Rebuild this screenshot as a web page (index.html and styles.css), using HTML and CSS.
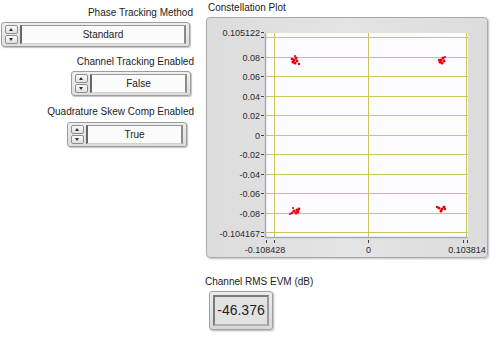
FILE: index.html
```html
<!DOCTYPE html>
<html>
<head>
<meta charset="utf-8">
<link rel="stylesheet" href="styles.css">
</head>
<body>
<div class="page">
  <div class="left">
    <div class="lbl l1">Phase Tracking Method</div>
    <div class="ring wide">
      <div class="spin"><span class="btn up"></span><span class="btn down"></span></div>
      <div class="field">Standard</div>
    </div>
    <div class="lbl l2">Channel Tracking Enabled</div>
    <div class="ring narrow">
      <div class="spin"><span class="btn up"></span><span class="btn down"></span></div>
      <div class="field">False</div>
    </div>
    <div class="lbl l3">Quadrature Skew Comp Enabled</div>
    <div class="ring narrow third">
      <div class="spin"><span class="btn up"></span><span class="btn down"></span></div>
      <div class="field">True</div>
    </div>
  </div>
  <div class="right">
    <div class="lbl plotlbl">Constellation Plot</div>
    <div class="frame">
      <svg class="plot" width="280" height="239" viewBox="0 0 280 239">
        <rect x="58" y="15" width="203" height="204" fill="#fcfcfe"/>
        <g stroke="#c9c95a" stroke-width="1">
          <line x1="58" y1="19.5" x2="261" y2="19.5"/>
          <line x1="58" y1="39.5" x2="261" y2="39.5"/>
          <line x1="58" y1="58.5" x2="261" y2="58.5"/>
          <line x1="58" y1="78.5" x2="261" y2="78.5"/>
          <line x1="58" y1="97.5" x2="261" y2="97.5"/>
          <line x1="58" y1="117.5" x2="261" y2="117.5"/>
          <line x1="58" y1="136.5" x2="261" y2="136.5"/>
          <line x1="58" y1="156.5" x2="261" y2="156.5"/>
          <line x1="58" y1="175.5" x2="261" y2="175.5"/>
          <line x1="58" y1="195.5" x2="261" y2="195.5"/>
          <line x1="58" y1="214.5" x2="261" y2="214.5"/>
          <line x1="67.5" y1="15" x2="67.5" y2="219"/>
          <line x1="161.5" y1="15" x2="161.5" y2="219"/>
          <line x1="259.5" y1="15" x2="259.5" y2="219"/>
        </g>
        <g stroke="#a4aac6" stroke-width="1.5">
          <line x1="58.5" y1="15" x2="58.5" y2="219.5"/>
          <line x1="58" y1="219.5" x2="261" y2="219.5"/>
        </g>
        <g stroke="#444" stroke-width="1">
          <line x1="54" y1="14.5" x2="57" y2="14.5"/>
          <line x1="54" y1="19.5" x2="57" y2="19.5"/>
          <line x1="54" y1="39.5" x2="57" y2="39.5"/>
          <line x1="54" y1="58.5" x2="57" y2="58.5"/>
          <line x1="54" y1="78.5" x2="57" y2="78.5"/>
          <line x1="54" y1="97.5" x2="57" y2="97.5"/>
          <line x1="54" y1="117.5" x2="57" y2="117.5"/>
          <line x1="54" y1="136.5" x2="57" y2="136.5"/>
          <line x1="54" y1="156.5" x2="57" y2="156.5"/>
          <line x1="54" y1="175.5" x2="57" y2="175.5"/>
          <line x1="54" y1="195.5" x2="57" y2="195.5"/>
          <line x1="54" y1="214.5" x2="57" y2="214.5"/>
          <line x1="54" y1="218.5" x2="57" y2="218.5"/>
          <line x1="59.5" y1="222" x2="59.5" y2="225"/>
          <line x1="67.5" y1="222" x2="67.5" y2="225"/>
          <line x1="161.5" y1="222" x2="161.5" y2="225"/>
          <line x1="256.5" y1="222" x2="256.5" y2="225"/>
          <line x1="260.5" y1="222" x2="260.5" y2="225"/>
        </g>
        <g class="ax" text-anchor="end">
          <text x="53" y="17.5">0.105122</text>
          <text x="53" y="42.5">0.08</text>
          <text x="53" y="61.5">0.06</text>
          <text x="53" y="81.5">0.04</text>
          <text x="53" y="100.5">0.02</text>
          <text x="53" y="120.5">0</text>
          <text x="53" y="139.5">-0.02</text>
          <text x="53" y="159.5">-0.04</text>
          <text x="53" y="178.5">-0.06</text>
          <text x="53" y="198.5">-0.08</text>
          <text x="53" y="219">-0.104167</text>
        </g>
        <g class="ax" text-anchor="middle">
          <text x="58" y="235">-0.108428</text>
          <text x="161.5" y="235">0</text>
          <text x="260" y="235">0.103814</text>
        </g>
        <g fill="#e80000">
          <circle cx="87" cy="42" r="1.6"/><circle cx="89" cy="40" r="1.5"/><circle cx="86" cy="44" r="1.6"/>
          <circle cx="88" cy="45" r="1.5"/><circle cx="90" cy="43" r="1.4"/><circle cx="85" cy="41" r="1.3"/>
          <circle cx="92" cy="46" r="1.2"/><circle cx="88" cy="38" r="1.1"/>
          <circle cx="234" cy="42" r="1.6"/><circle cx="236" cy="40" r="1.5"/><circle cx="233" cy="44" r="1.5"/>
          <circle cx="235" cy="45" r="1.5"/><circle cx="237" cy="43" r="1.4"/><circle cx="238" cy="39" r="1.1"/>
          <circle cx="232" cy="42" r="1.2"/>
          <circle cx="87" cy="193" r="1.6"/><circle cx="90" cy="192" r="1.6"/><circle cx="89" cy="195" r="1.5"/>
          <circle cx="92" cy="191" r="1.4"/><circle cx="85" cy="195" r="1.3"/><circle cx="86" cy="190" r="1.1"/>
          <circle cx="83" cy="196" r="1.1"/><circle cx="91" cy="194" r="1.4"/>
          <circle cx="232" cy="190" r="1.5"/><circle cx="235" cy="191" r="1.6"/><circle cx="237" cy="189" r="1.5"/>
          <circle cx="234" cy="193" r="1.5"/><circle cx="230" cy="189" r="1.2"/><circle cx="238" cy="191" r="1.2"/>
        </g>
      </svg>
    </div>
    <div class="lbl evmlbl">Channel RMS EVM (dB)</div>
    <div class="evm">
      <div class="evmin">-46.376</div>
    </div>
  </div>
</div>
</body>
</html>
```
FILE: styles.css
```css
html, body {
  margin: 0;
  padding: 0;
  background: #ffffff;
}
body {
  width: 500px;
  height: 337px;
  overflow: hidden;
  font-family: "Liberation Sans", Arial, sans-serif;
  color: #222;
}
.page {
  display: flex;
  align-items: flex-start;
}
.left {
  width: 195px;
  display: flex;
  flex-direction: column;
  align-items: flex-end;
  padding-top: 7px;
}
.lbl {
  font-size: 10px;
  line-height: 12px;
  white-space: nowrap;
  color: #222;
}
.l1 { margin-right: 2px; }
.l2 { margin-right: 1px; margin-top: 9px; }
.l3 { margin-right: 1px; margin-top: 10px; }
.ring {
  box-sizing: border-box;
  margin-top: 3px;
  height: 25px;
  display: flex;
  align-items: stretch;
  padding: 2px 3px 2px 3px;
  border: 1px solid #9d9d9d;
  border-radius: 3px;
  background: linear-gradient(#eeeeee, #dedede);
  box-shadow: 1px 1px 1px rgba(0, 0, 0, 0.25);
}
.wide { width: 189px; margin-right: 5px; }
.narrow { width: 120px; margin-right: 4px; }
.third { margin-right: 8px; margin-top: 4px; }
.spin {
  width: 13px;
  display: flex;
  flex-direction: column;
  gap: 1px;
  margin-right: 2px;
}
.btn {
  flex: 1;
  border: 1px solid #8f8f8f;
  border-radius: 2px;
  background: linear-gradient(#fbfbfb, #e0e0e0);
  position: relative;
}
.btn::after {
  content: "";
  position: absolute;
  left: 3px;
  top: 2px;
  border-left: 2.5px solid transparent;
  border-right: 2.5px solid transparent;
}
.up::after { border-bottom: 3px solid #333; }
.down::after { border-top: 3px solid #333; top: 2px; }
.field {
  flex: 1;
  background: #fbfbfb;
  border-left: 2px solid #666;
  border-top: 1px solid #999;
  border-right: 2px solid #8a8a8a;
  border-bottom: 1px solid #d0d0d0;
  font-size: 10px;
  line-height: 17px;
  text-align: center;
  color: #222;
}
.right {
  display: flex;
  flex-direction: column;
  align-items: flex-start;
  padding-top: 2px;
}
.plotlbl { margin-left: 13px; }
.frame {
  box-sizing: border-box;
  margin-left: 11px;
  margin-top: 3px;
  width: 282px;
  height: 241px;
  border: 1px solid #a9a9a9;
  border-radius: 4px;
  background: linear-gradient(90deg, #dcdcdc, #e4e4e4 50%, #dcdcdc);
  box-shadow: 1px 1px 2px rgba(0, 0, 0, 0.25);
}
.plot {
  display: block;
}
.ax {
  font-family: "Liberation Sans", Arial, sans-serif;
  font-size: 9px;
  fill: #2a2a2a;
}
.evmlbl { margin-left: 10px; margin-top: 18px; }
.evm {
  box-sizing: border-box;
  margin-left: 14px;
  margin-top: 3px;
  width: 64px;
  height: 39px;
  padding: 3px;
  border: 1px solid #a0a0a0;
  border-radius: 3px;
  background: linear-gradient(#ececec, #d8d8d8);
  box-shadow: 1px 1px 2px rgba(0, 0, 0, 0.3);
}
.evmin {
  box-sizing: border-box;
  height: 100%;
  border: 2px solid #7a7a7a;
  border-right-color: #9a9a9a;
  border-bottom-color: #b0b0b0;
  background: #e2e2e2;
  font-size: 14px;
  line-height: 27px;
  text-align: center;
  color: #222;
}
```
